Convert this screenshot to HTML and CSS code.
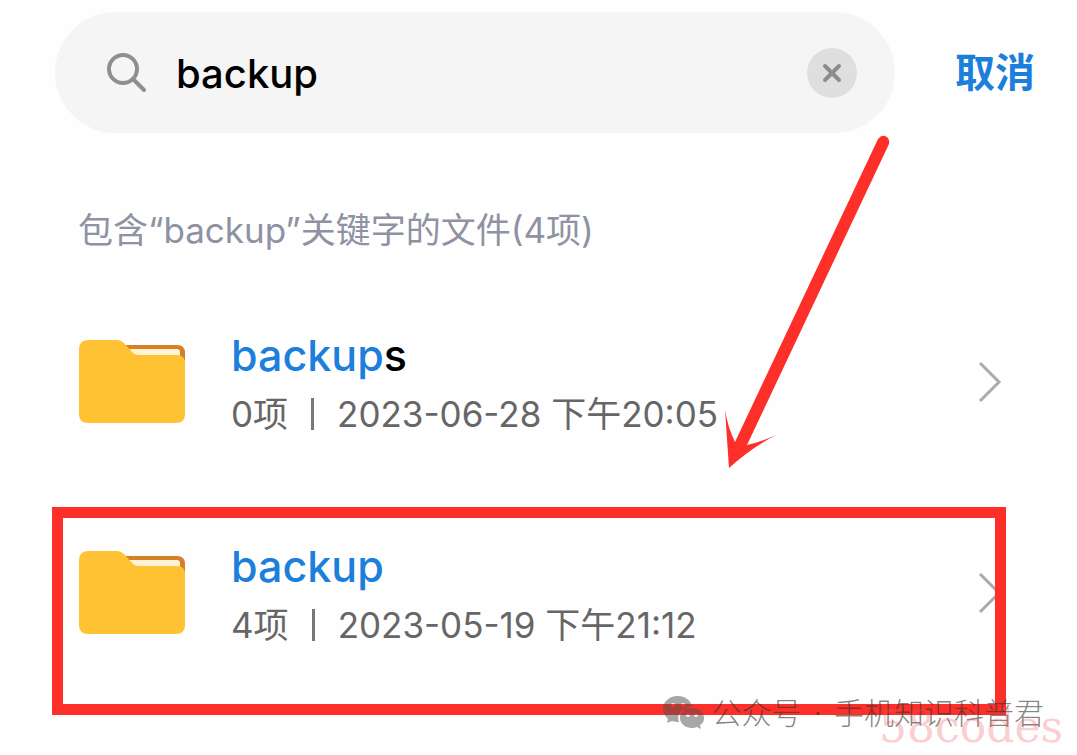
FILE: index.html
```html
<!DOCTYPE html>
<html lang="zh-CN">

<head>
    <meta charset="UTF-8">
    <meta name="viewport" content="width=device-width, initial-scale=1.0">
    <title>backup</title>
    <link rel="stylesheet" href="styles.css">
</head>

<body>

    <form class="search-bar">
        <div class="search-box">
            <label for="keyword" aria-label="搜索">
                <svg class="search-icon" viewBox="0 0 42 42" aria-hidden="true">
                    <circle cx="17" cy="17" r="14" />
                    <path d="M27 27 L38 38" />
                </svg>
            </label>
            <input type="text" class="search-input" id="keyword" name="keyword" value="backup">
            <button type="reset" class="clear" aria-label="清除">
                <svg viewBox="0 0 50 50" aria-hidden="true">
                    <path d="M18 18 L32 32 M32 18 L18 32" />
                </svg>
            </button>
        </div>
        <button type="button" class="cancel">取消</button>
    </form>

    <main>
        <h2 class="summary">包含“backup”关键字的文件(4项)</h2>

        <ul class="file-list">
            <li class="file">
                <svg class="folder" viewBox="0 0 106 84" aria-hidden="true">
                    <path fill="#d77f25" d="M40 5 H98 Q106 5 106 13 V40 H40 Z" />
                    <path fill="#fff3d6" d="M48 9 H98 Q101 9 101 12 V30 H48 Z" />
                    <path fill="#ffc233" d="M10 0 H38 Q42 0 45 3 L54 13 Q56 15 60 15 H98 Q106 15 106 23 V74 Q106 83 97 83 H9 Q0 83 0 74 V9 Q0 0 10 0 Z" />
                </svg>
                <div class="file-info">
                    <div class="file-name"><mark>backup</mark>s</div>
                    <div class="file-meta"><span>0项</span><span class="divider"></span><span>2023-06-28 下午20:05</span></div>
                </div>
                <svg class="chevron" viewBox="0 0 24 42" aria-hidden="true">
                    <path d="M2 2 L21 21 L2 40" />
                </svg>
            </li>
            <li class="file marked">
                <svg class="folder" viewBox="0 0 106 84" aria-hidden="true">
                    <path fill="#d77f25" d="M40 5 H98 Q106 5 106 13 V40 H40 Z" />
                    <path fill="#fff3d6" d="M48 9 H98 Q101 9 101 12 V30 H48 Z" />
                    <path fill="#ffc233" d="M10 0 H38 Q42 0 45 3 L54 13 Q56 15 60 15 H98 Q106 15 106 23 V74 Q106 83 97 83 H9 Q0 83 0 74 V9 Q0 0 10 0 Z" />
                </svg>
                <div class="file-info">
                    <div class="file-name"><mark>backup</mark></div>
                    <div class="file-meta"><span>4项</span><span class="divider"></span><span>2023-05-19 下午21:12</span></div>
                </div>
                <svg class="chevron" viewBox="0 0 24 42" aria-hidden="true">
                    <path d="M2 2 L21 21 L2 40" />
                </svg>
            </li>
        </ul>
    </main>

    <!-- Red arrow pointing at the marked folder -->
    <svg class="arrow" viewBox="0 0 170 334" aria-hidden="true">
        <path d="M157 4 Q160 0 164 1 Q169 3 168 9 L26 310 Q40 307 55 300 Q30 313 8 333 L4 275 Q7 293 14 307 Z" />
    </svg>

    <div class="account">
        <svg class="account-logo" viewBox="0 0 42 34" aria-hidden="true">
            <path fill-rule="evenodd" d="M15 0 C6 0 0 6 0 13 C0 17 2 20 5 23 L4 27 L9 25 Q12 26 16 26 C13 18 19 11 29 11 C28 4 22 0 15 0 Z M8 9 a2 2 0 1 0 4 0 a2 2 0 1 0 -4 0 Z M18 9 a2 2 0 1 0 4 0 a2 2 0 1 0 -4 0 Z" />
            <path fill-rule="evenodd" d="M29 12 C22 12 17 16 17 22 C17 28 23 32 29 32 Q32 32 34 31 L38 33 L37 29 C40 27 41 25 41 22 C41 16 36 12 29 12 Z M23 19 a2 2 0 1 0 4 0 a2 2 0 1 0 -4 0 Z M31 19 a2 2 0 1 0 4 0 a2 2 0 1 0 -4 0 Z" />
        </svg>
        <span>公众号</span>
        <span>·</span>
        <span>手机知识科普君</span>
    </div>
    <div class="site">58codes</div>

</body>

</html>
```
FILE: styles.css
```css
*,
*::after {
    box-sizing: border-box;
}

body {
    position: relative;
    margin: 0;
    min-height: 100vh;
    background-color: #fefefe;
    font-family: Inter, "Noto Sans CJK SC", sans-serif;
    overflow: hidden;
}

button,
input {
    padding: 0;
    border: none;
    background: none;
    font-family: inherit;
}

.search-bar {
    display: flex;
    align-items: center;
    gap: 60px;
    padding: 12px 42px 0 55px;
}

.search-box {
    display: flex;
    flex: 1;
    align-items: center;
    min-width: 0;
    height: 121px;
    padding: 0 38px 0 51px;
    border-radius: 61px;
    background-color: #f5f5f5;
}

.search-icon {
    display: block;
    width: 42px;
    height: 42px;
    fill: none;
    stroke: #8f8f8f;
    stroke-width: 4;
    stroke-linecap: round;
}

.search-input {
    flex: 1;
    min-width: 0;
    height: 60px;
    padding-top: 2px;
    margin-left: 28px;
    color: #000;
    font-size: 40px;
    font-weight: 500;
    outline: none;
}

.clear {
    flex: none;
    width: 50px;
    height: 50px;
    border-radius: 50%;
    background-color: #dfdfdf;
}

.clear svg {
    display: block;
    fill: none;
    stroke: #8c8c8c;
    stroke-width: 4;
    stroke-linecap: round;
}

.cancel {
    flex: none;
    color: #1c7fdc;
    font-size: 40px;
    font-weight: 700;
    line-height: 60px;
}

.summary {
    margin: 67px 78px 16px;
    color: #8e92a2;
    font-size: 35px;
    font-weight: 400;
    line-height: 60px;
}

.file-list {
    margin: 0;
    padding: 0;
    list-style: none;
}

.file {
    position: relative;
    display: flex;
    align-items: center;
    height: 211px;
    padding: 0 75px 0 79px;
}

/* Red frame over the folder to open */
.marked::after {
    content: "";
    position: absolute;
    top: 20px;
    right: 71px;
    left: 52px;
    height: 208px;
    border: 11px solid #fc3029;
}

.folder {
    flex: none;
    width: 106px;
    height: 84px;
}

.file-info {
    flex: 1;
    padding-top: 4px;
    margin-left: 46px;
}

.file-name {
    color: #000;
    font-size: 43px;
    font-weight: 500;
    line-height: 60px;
}

.file-name mark {
    background: none;
    color: #1c7fdc;
}

.file-meta {
    display: flex;
    align-items: center;
    color: #666;
    font-size: 35px;
    line-height: 58px;
    white-space: nowrap;
}

.divider {
    width: 3px;
    height: 32px;
    margin: 0 23px;
    background-color: #777;
}

.chevron {
    flex: none;
    width: 24px;
    height: 42px;
    fill: none;
    stroke: #aaa;
    stroke-width: 3;
}

.arrow {
    position: absolute;
    top: 135px;
    left: 721px;
    width: 170px;
    height: 334px;
    fill: #fc3029;
}

.account {
    position: absolute;
    right: 33px;
    bottom: 20px;
    display: flex;
    align-items: center;
    gap: 12px;
    color: rgba(50, 50, 50, 0.6);
    font-size: 30px;
    font-weight: 300;
    line-height: 44px;
    white-space: nowrap;
}

.account-logo {
    width: 42px;
    height: 34px;
    margin-right: -5px;
    fill: rgba(80, 80, 80, 0.5);
}

.site {
    position: absolute;
    right: 14px;
    bottom: 2px;
    color: rgba(240, 90, 90, 0.3);
    font-family: "DejaVu Serif", serif;
    font-size: 44px;
    line-height: 52px;
}
```
